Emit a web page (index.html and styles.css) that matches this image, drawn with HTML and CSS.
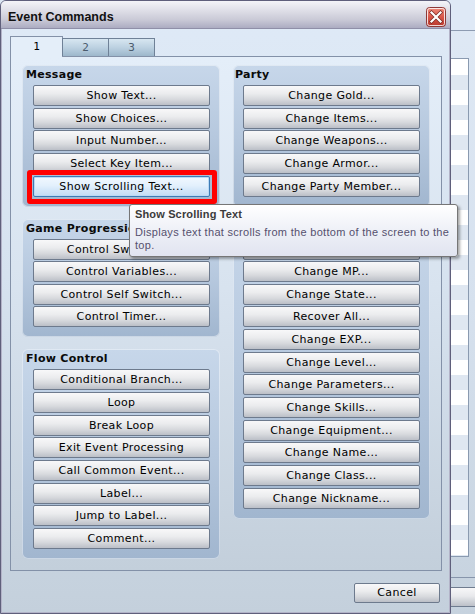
FILE: index.html
```html
<!DOCTYPE html>
<html>
<head>
<meta charset="utf-8">
<title>Event Commands</title>
<link rel="stylesheet" href="styles.css">
</head>
<body>
<div class="bgwin">
  <div class="bg-head"></div>
  <div class="bg-body">
    <div class="bg-list"><div class="bg-rows"></div></div>
    <div class="bg-foot"><div class="bg-btn">...</div></div>
  </div>
</div>

<div class="window">
  <div class="titlebar">
    <span class="title">Event Commands</span>
    <div class="close">
      <svg width="20" height="20" viewBox="0 0 20 20">
        <defs>
          <linearGradient id="cg" x1="0" y1="0" x2="0" y2="1">
            <stop offset="0" stop-color="#ee8d7d"/>
            <stop offset="0.5" stop-color="#d9574a"/>
            <stop offset="1" stop-color="#b8382c"/>
          </linearGradient>
        </defs>
        <rect x="0.5" y="0.5" width="19" height="19" rx="3" fill="url(#cg)" stroke="#8d3a38"/>
        <rect x="1.5" y="1.5" width="17" height="17" rx="2" fill="none" stroke="#ffffff" stroke-opacity="0.8"/>
        <path d="M5.5 5.5 L14.5 14.5 M14.5 5.5 L5.5 14.5" stroke="#7a2a24" stroke-width="3.6" stroke-linecap="square"/>
        <path d="M5.5 5.5 L14.5 14.5 M14.5 5.5 L5.5 14.5" stroke="#ffffff" stroke-width="2.2" stroke-linecap="square"/>
      </svg>
    </div>
  </div>
  <div class="wbody">
    <div class="tabs">
      <div class="tab active">1</div>
      <div class="tab">2</div>
      <div class="tab">3</div>
    </div>
    <div class="panel">
      <div class="col col-left">
        <div class="group">
          <div class="gtitle">Message</div>
          <div class="btns">
            <div class="btn">Show Text...</div>
            <div class="btn">Show Choices...</div>
            <div class="btn">Input Number...</div>
            <div class="btn">Select Key Item...</div>
            <div class="btn hot">Show Scrolling Text...<span class="mark"></span></div>
          </div>
        </div>
        <div class="group">
          <div class="gtitle">Game Progression</div>
          <div class="btns">
            <div class="btn">Control Switches...</div>
            <div class="btn">Control Variables...</div>
            <div class="btn">Control Self Switch...</div>
            <div class="btn">Control Timer...</div>
          </div>
        </div>
        <div class="group">
          <div class="gtitle">Flow Control</div>
          <div class="btns">
            <div class="btn">Conditional Branch...</div>
            <div class="btn">Loop</div>
            <div class="btn">Break Loop</div>
            <div class="btn">Exit Event Processing</div>
            <div class="btn">Call Common Event...</div>
            <div class="btn">Label...</div>
            <div class="btn">Jump to Label...</div>
            <div class="btn">Comment...</div>
          </div>
        </div>
      </div>
      <div class="col col-right">
        <div class="group">
          <div class="gtitle">Party</div>
          <div class="btns">
            <div class="btn">Change Gold...</div>
            <div class="btn">Change Items...</div>
            <div class="btn">Change Weapons...</div>
            <div class="btn">Change Armor...</div>
            <div class="btn">Change Party Member...</div>
          </div>
        </div>
        <div class="group">
          <div class="gtitle">Actor</div>
          <div class="btns">
            <div class="btn">Change HP...</div>
            <div class="btn">Change MP...</div>
            <div class="btn">Change State...</div>
            <div class="btn">Recover All...</div>
            <div class="btn">Change EXP...</div>
            <div class="btn">Change Level...</div>
            <div class="btn">Change Parameters...</div>
            <div class="btn">Change Skills...</div>
            <div class="btn">Change Equipment...</div>
            <div class="btn">Change Name...</div>
            <div class="btn">Change Class...</div>
            <div class="btn">Change Nickname...</div>
          </div>
        </div>
      </div>
    </div>
    <div class="footer">
      <div class="btn cancel">Cancel</div>
    </div>
  </div>
</div>

<div class="tooltip">
  <div class="tt-title">Show Scrolling Text</div>
  <div class="tt-desc">Displays text that scrolls from the bottom of the screen to the<br>top.</div>
</div>
</body>
</html>
```

FILE: styles.css
```css
* { box-sizing: border-box; }

html, body {
  margin: 0;
  padding: 0;
}

body {
  width: 475px;
  height: 614px;
  overflow: hidden;
  position: relative;
  background: #dbe6f2;
  font-family: "DejaVu Sans", sans-serif;
  font-size: 11px;
  color: #000;
}

/* ---------- window behind ---------- */
.bgwin {
  position: absolute;
  left: 400px;
  top: 0;
  width: 75px;
  height: 614px;
  display: flex;
  flex-direction: column;
  background: linear-gradient(to bottom, #dfe9f5 0%, #d6e1ee 50%, #c6d2de 100%);
}

.bg-head {
  height: 31px;
  border-bottom: 1px solid #8d9bb1;
  background: #dfe9f6;
}

.bg-body {
  flex: 1;
  padding-top: 27px;
  display: flex;
  flex-direction: column;
}

.bg-list {
  width: 69px;
  height: 499px;
  border: 1px solid #8a9ab0;
  border-left: none;
  background: #ffffff;
  padding-top: 16px;
}

.bg-rows {
  height: 100%;
  background: repeating-linear-gradient(to bottom, #dfe7f1 0 15px, #ffffff 15px 30px);
}

.bg-foot {
  margin-top: 20px;
  border-top: 1px solid #8795ab;
  padding-top: 9px;
}

.bg-btn {
  height: 20px;
  width: 120px;
  margin-left: -40px;
  border: 1px solid #6f7c8f;
  border-radius: 2px;
  background: linear-gradient(to bottom, #f7f7f8 0%, #e8e9ec 45%, #d3d6db 70%, #bcc0c8 100%);
  text-align: right;
  padding-right: 30px;
  line-height: 18px;
}

/* ---------- main window ---------- */
.window {
  position: absolute;
  left: 0;
  top: 0;
  width: 451px;
  height: 614px;
  border: 1px solid #5f5f7b;
  border-radius: 6px 6px 0 0;
  box-shadow: inset 0 0 0 1px #b3b3c8;
  background: linear-gradient(to bottom, #dfeaf7 0%, #d6e2ef 45%, #c4d0dc 100%);
  display: flex;
  flex-direction: column;
}

.titlebar {
  height: 28px;
  flex: none;
  border-bottom: 1px solid #8f8fa8;
  border-radius: 5px 5px 0 0;
  background: linear-gradient(to bottom, #f4f4f8 0%, #e2e2ea 30%, #c9c9d6 70%, #acacc2 100%);
  display: flex;
  align-items: center;
  justify-content: space-between;
  padding: 1px 4px 0 7px;
}

.title {
  font-family: "Liberation Sans", sans-serif;
  font-weight: bold;
  font-size: 12.5px;
  color: #111;
  padding-top: 3px;
}

.close {
  width: 20px;
  height: 20px;
  margin-top: 3px;
}

.close svg { display: block; }

.wbody {
  flex: 1;
  padding: 7px 8px 0 9px;
  display: flex;
  flex-direction: column;
}

/* tabs */
.tabs {
  display: flex;
  align-items: flex-end;
  height: 20px;
  position: relative;
  z-index: 2;
}

.tab {
  width: 47px;
  height: 18px;
  margin-right: -1px;
  border: 1px solid #6f8197;
  border-bottom: none;
  background: linear-gradient(to bottom, #d7e6f1 0%, #bcd1e1 50%, #9db7cb 100%);
  font-family: "DejaVu Sans Mono", monospace;
  font-size: 11px;
  color: #4b5b6d;
  text-align: center;
  line-height: 17px;
}

.tab.active {
  width: 53px;
  height: 21px;
  margin-bottom: -1px;
  border-color: #8391a8;
  background: #e4eef9;
  color: #000;
  line-height: 20px;
}

/* panel */
.panel {
  height: 515px;
  border: 1px solid #8391a8;
  background: linear-gradient(to bottom, #e4eef9 0%, #d8e3ef 45%, #c3cfdb 100%);
  padding: 8px 11px;
  display: flex;
  gap: 13px;
}

.col {
  display: flex;
  flex-direction: column;
  gap: 12px;
}

.col-left { width: 198px; }
.col-right { width: 197px; }

.group {
  border-radius: 6px;
  background: linear-gradient(to bottom, #c7d7ea 0%, #b6c8de 50%, #a1b6cf 100%);
  box-shadow: inset 0 0 0 1px rgba(255, 255, 255, 0.45);
  padding: 0 10px 10px 11px;
}

.col-right .group { padding-left: 10px; }

.gtitle {
  height: 20px;
  line-height: 20px;
  font-weight: bold;
  font-size: 11px;
  letter-spacing: 0.3px;
  margin-left: -7px;
  color: #0a0a0a;
  white-space: nowrap;
}

.col-right .gtitle { margin-left: -8px; }

.btns {
  display: flex;
  flex-direction: column;
  gap: 1.65px;
}

.btn {
  position: relative;
  height: 21px;
  border: 1px solid #6d7a8d;
  border-radius: 2px;
  background: linear-gradient(to bottom, #f8f8f9 0%, #ebecee 40%, #d7d9dd 70%, #bbbfc7 100%);
  text-align: center;
  line-height: 19px;
  letter-spacing: 0.35px;
  white-space: nowrap;
  color: #000;
}

.btn.hot {
  border-color: #3d7bb5;
  background: linear-gradient(to bottom, #f1f8ff 0%, #e3f0fc 45%, #d2e6f9 70%, #c3dcf4 100%);
  box-shadow: inset 0 0 0 1px #b9d9f5;
}

.mark {
  position: absolute;
  left: -7px;
  top: -7px;
  right: -8px;
  bottom: -8px;
  border: 5px solid #ff0000;
  border-radius: 3px;
}

/* footer */
.footer {
  display: flex;
  justify-content: flex-end;
  padding: 12px 2px 0 0;
}

.btn.cancel {
  width: 86px;
  height: 20px;
  line-height: 18px;
}

/* tooltip */
.tooltip {
  position: absolute;
  left: 129px;
  top: 204px;
  width: 329px;
  height: 53px;
  border: 1px solid #767676;
  border-radius: 3px;
  background: linear-gradient(to bottom, #ffffff 0%, #eef0f7 50%, #e1e4f0 100%);
  box-shadow: 2px 2px 3px rgba(0, 0, 0, 0.35);
  padding: 3px 6px 0 5px;
  font-family: "Liberation Sans", sans-serif;
  font-size: 11px;
}

.tt-title {
  font-weight: bold;
  color: #3b3b3b;
  line-height: 13px;
  letter-spacing: 0.15px;
}

.tt-desc {
  margin-top: 5px;
  color: #55506e;
  line-height: 13px;
  letter-spacing: 0.3px;
  white-space: nowrap;
}
```
